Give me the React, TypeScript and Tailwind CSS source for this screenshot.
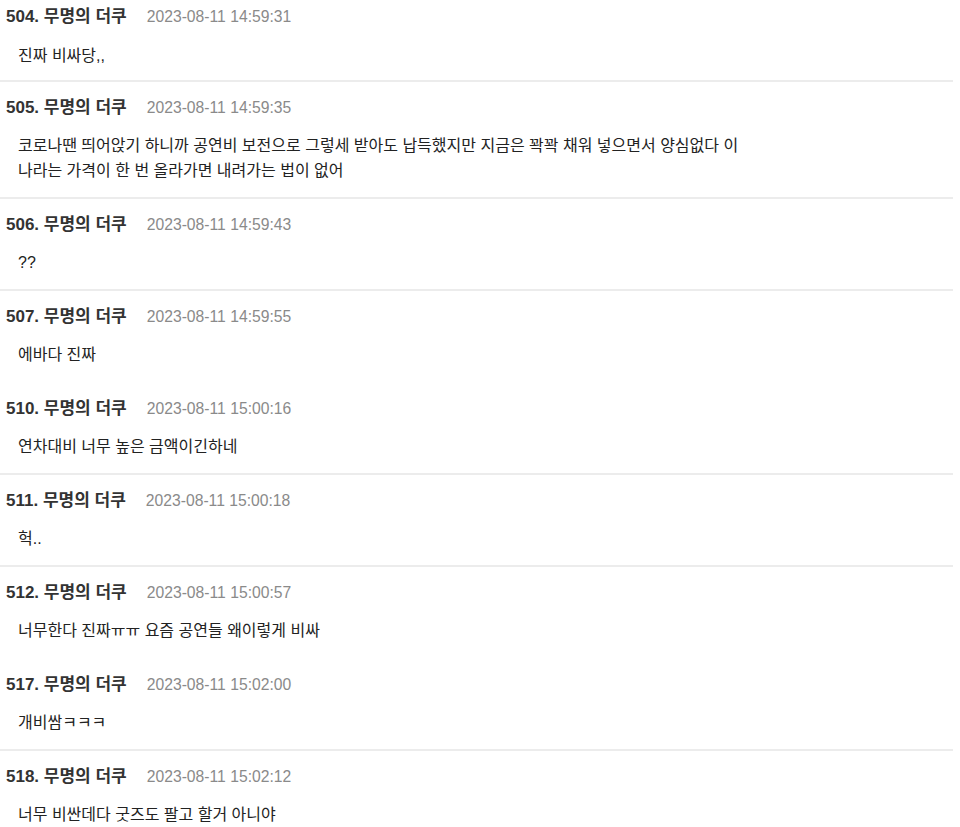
import React from "react";

type Item = { n: string; t: string; body: string[]; sep: boolean };

const items: Item[] = [
  { n: "504.", t: "2023-08-11 14:59:31", body: ["진짜 비싸당,,"], sep: true },
  {
    n: "505.",
    t: "2023-08-11 14:59:35",
    body: [
      "코로나땐 띄어앉기 하니까 공연비 보전으로 그렇세 받아도 납득했지만 지금은 꽉꽉 채워 넣으면서 양심없다 이",
      "나라는 가격이 한 번 올라가면 내려가는 법이 없어",
    ],
    sep: true,
  },
  { n: "506.", t: "2023-08-11 14:59:43", body: ["??"], sep: true },
  { n: "507.", t: "2023-08-11 14:59:55", body: ["에바다 진짜"], sep: false },
  { n: "510.", t: "2023-08-11 15:00:16", body: ["연차대비 너무 높은 금액이긴하네"], sep: true },
  { n: "511.", t: "2023-08-11 15:00:18", body: ["헉.."], sep: true },
  { n: "512.", t: "2023-08-11 15:00:57", body: ["너무한다 진짜ㅠㅠ 요즘 공연들 왜이렇게 비싸"], sep: false },
  { n: "517.", t: "2023-08-11 15:02:00", body: ["개비쌈ㅋㅋㅋ"], sep: true },
  { n: "518.", t: "2023-08-11 15:02:12", body: ["너무 비싼데다 굿즈도 팔고 할거 아니야"], sep: false },
];

export default function App() {
  return (
    <div
      className="w-[960px] h-[827px] overflow-hidden bg-white"
      style={{ fontFamily: '"Liberation Sans", "Noto Sans CJK KR", sans-serif' }}
    >
      <div className="w-[953px]">
        {items.map((it, i) => (
          <div
            key={it.n}
            className={`${i === 0 ? "pt-[6px] pb-[12px]" : "pt-[15px] pb-[14px]"} border-b-2 ${
              it.sep ? "border-[#ececec]" : "border-transparent"
            }`}
          >
            <div className="flex items-center h-[22px] pl-[6px]">
              <span className="text-[17px] font-bold text-[#333333]">
                {it.n} 무명의 더쿠
              </span>
              <span className="ml-[20px] text-[15.7px] text-[#8a8a8a]">{it.t}</span>
            </div>
            <div
              className={`${i === 0 ? "mt-[15px]" : "mt-[14px]"} pl-[18px] text-[16px] leading-[25px] text-[#222222]`}
            >
              {it.body.map((l, j) => (
                <div key={j}>{l}</div>
              ))}
            </div>
          </div>
        ))}
      </div>
    </div>
  );
}
